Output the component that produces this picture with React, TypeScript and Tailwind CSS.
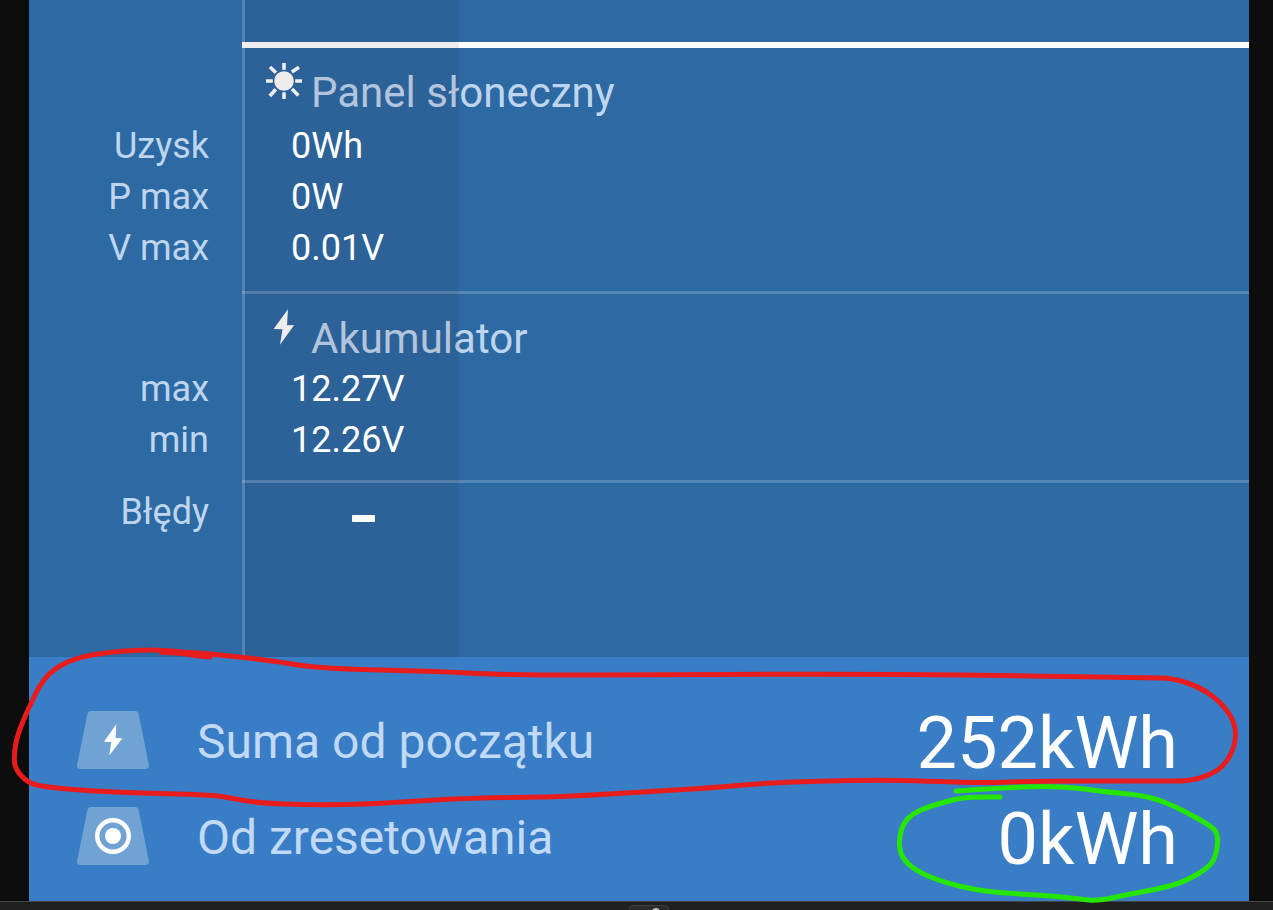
import { ReactNode } from 'react';

type Point = [number, number];

interface HistorySection {
  title: string;
  icon: ReactNode;
  line: string;
  titleGap: string;
  bottomGap: string;
  rows: { label: string; value: string }[];
}

const redStroke: Point[] = [
  [210, 657], [198, 656], [180, 653], [153, 652], [190, 652], [230, 656], [275, 661], [303, 666], [340, 669],
  [420, 671], [450, 672], [485, 674], [540, 675], [640, 675], [820, 674], [985, 675], [1150, 678], [1172, 678],
  [1200, 687], [1223, 704], [1236, 725], [1235, 746], [1225, 765], [1210, 775], [1190, 781], [1160, 781],
  [1030, 781], [985, 783], [925, 781], [880, 780], [820, 781], [765, 783], [710, 788], [640, 792], [595, 795],
  [550, 797], [470, 798], [400, 802], [370, 804], [310, 805], [260, 803], [235, 799], [215, 795], [140, 793],
  [90, 791], [45, 787], [28, 783], [15, 769], [14, 755], [17, 736], [28, 709], [43, 679], [60, 665], [80, 657],
  [110, 652], [140, 650], [165, 650], [190, 653],
];

const greenStroke: Point[] = [
  [956, 791], [970, 790], [1003, 788], [1043, 786], [1078, 788], [1106, 792], [1140, 795], [1163, 801],
  [1186, 812], [1211, 826], [1218, 834], [1217, 852], [1211, 866], [1186, 881], [1163, 888], [1130, 894],
  [1098, 901], [1080, 899], [1053, 896], [1003, 893], [976, 890], [946, 883], [920, 873], [904, 861],
  [899, 848], [900, 835], [903, 824], [912, 814], [930, 806], [960, 798], [976, 797], [1000, 797],
];

// smooth line through the midpoints of the recorded points
function toPath(points: Point[]) {
  const [first, ...rest] = points;
  const last = points[points.length - 1];
  let d = `M${first[0]} ${first[1]}`;
  rest.forEach(([x, y], i) => {
    const next = rest[i + 1];
    if (next) {
      d += ` Q${x} ${y} ${(x + next[0]) / 2} ${(y + next[1]) / 2}`;
    }
  });
  return `${d} L${last[0]} ${last[1]}`;
}

function SunIcon() {
  return (
    <svg viewBox="0 0 36 36" className="size-9 shrink-0 text-white" aria-hidden="true">
      <circle cx="18" cy="18" r="9.8" fill="currentColor" />
      <path
        d="M18 0v6.8M18 29.2V36M0 18h6.8M29.2 18H36M4 4l6 5.800M33 4.200l-7.200 4.800M3.800 33l6-6.800M32.400 32.400l-6.400-6.400"
        stroke="currentColor"
        strokeWidth="3.6"
      />
    </svg>
  );
}

function BoltIcon() {
  return (
    <svg viewBox="0 0 36 36" className="size-9 shrink-0 text-white" aria-hidden="true">
      <path d="M22 .2 7.6 20l8.9.3L14 35.8 28.2 16l-7.2.2z" fill="currentColor" />
    </svg>
  );
}

function Badge({ children }: { children: ReactNode }) {
  return (
    <svg viewBox="0 0 72 58" className="h-[58px] w-[72px] shrink-0 text-white" aria-hidden="true">
      <path
        d="M14 0h44q3 0 3.700 3.200L71.900 53.800Q72.500 58 68 58H4Q-.5 58 .1 53.800L10.300 3.200Q11 0 14 0z"
        fill="#71a2d4"
      />
      {children}
    </svg>
  );
}

const sections: HistorySection[] = [
  {
    title: 'Panel słoneczny',
    icon: <SunIcon />,
    line: 'border-t-[6px] border-white',
    titleGap: 'mb-1',
    bottomGap: 'h-[17px]',
    rows: [
      { label: 'Uzysk', value: '0Wh' },
      { label: 'P max', value: '0W' },
      { label: 'V max', value: '0.01V' },
    ],
  },
  {
    title: 'Akumulator',
    icon: <BoltIcon />,
    line: 'border-t-[3px] border-white/20',
    titleGap: 'mb-px',
    bottomGap: 'h-[14px]',
    rows: [
      { label: 'max', value: '12.27V' },
      { label: 'min', value: '12.26V' },
    ],
  },
];

const totals = [
  {
    label: 'Suma od początku',
    value: '252kWh',
    icon: <path d="M39.300 13.300 27 30.700l7.300.2-2 13.600 13.200-17.200-6.900-.2z" fill="currentColor" />,
  },
  {
    label: 'Od zresetowania',
    value: '0kWh',
    icon: (
      <>
        <circle cx="36" cy="29" r="15.800" fill="none" stroke="currentColor" strokeWidth="4.400" />
        <circle cx="36" cy="29" r="8" fill="currentColor" />
      </>
    ),
  },
];

function HistoryTable() {
  return (
    <table className="w-full table-fixed border-separate border-spacing-0 text-4xl leading-[51px]">
      <colgroup>
        <col className="w-[213px]" />
        <col />
      </colgroup>
      {sections.map((section) => (
        <tbody key={section.title}>
          <tr>
            <td></td>
            <td className={`p-0 ${section.line}`}>
              <div className={`flex items-start gap-[9px] pt-[15px] pl-6 ${section.titleGap}`}>
                {section.icon}
                <h2 className="pt-[6px] text-[42px] leading-[48px] text-[#bfd5ee]">{section.title}</h2>
              </div>
            </td>
          </tr>
          {section.rows.map((row) => (
            <tr key={row.label}>
              <th scope="row" className="p-0 pr-[33px] text-right font-normal text-[#bfd5ee]">
                {row.label}
              </th>
              <td className="p-0 pl-[49px]">
                <span className="relative z-10">{row.value}</span>
              </td>
            </tr>
          ))}
          <tr>
            <td colSpan={2} className={`p-0 ${section.bottomGap}`}></td>
          </tr>
        </tbody>
      ))}
      <tbody>
        <tr>
          <th scope="row" className="p-0 pt-[7px] pr-[33px] text-right font-normal text-[#bfd5ee]">
            Błędy
          </th>
          <td className="border-t-[3px] border-white/20 p-0 pt-2 pl-[110px]">
            <div role="img" aria-label="brak" className="relative z-10 mt-2 h-[7px] w-[23px] rounded-[1px] bg-white" />
          </td>
        </tr>
      </tbody>
    </table>
  );
}

export default function App() {
  return (
    <div className="relative flex min-h-screen flex-col bg-[#0d0d0d] font-[Roboto,sans-serif] text-white">
      <main className="mr-6 ml-[29px] flex flex-1 flex-col bg-[#2d6aa4]">
        <section className="relative flex-1 pt-[42px]">
          <HistoryTable />
          {/* selected day column */}
          <div className="pointer-events-none absolute inset-y-0 left-[213px] w-[217px] border-l-[3px] border-white/20 bg-[#201008]/8" />
        </section>

        <section className="bg-[#397dc6] pt-[35px] pr-[71px] pb-[17px] pl-12">
          <dl>
            {totals.map((total) => (
              <div key={total.label} className="flex h-24 items-center">
                <Badge>{total.icon}</Badge>
                <dt className="flex-1 pt-1 pl-12 text-5xl text-[#c0d9f5]">{total.label}</dt>
                <dd className="pt-2 text-7xl">{total.value}</dd>
              </div>
            ))}
          </dl>
        </section>
      </main>

      <footer className="h-[9px] overflow-hidden border-t border-[#444444] bg-[#202020]">
        <div className="mt-[3px] ml-[49.4%] flex h-3 w-10 justify-end rounded-t-[4px] border border-[#3c3c3c] bg-[#2b2b2b] pt-[2px] pr-2">
          <span className="size-2 rounded-full bg-[#c5bda9]" />
        </div>
      </footer>

      {/* hand-drawn marks */}
      <svg
        viewBox="0 0 1273 910"
        preserveAspectRatio="none"
        className="pointer-events-none absolute inset-0 z-20 h-full w-full"
        fill="none"
        strokeWidth="5"
        strokeLinecap="round"
        strokeLinejoin="round"
        aria-hidden="true"
      >
        <path d={toPath(redStroke)} stroke="#e81c1c" />
        <path d={toPath(greenStroke)} stroke="#26e600" />
      </svg>
    </div>
  );
}
